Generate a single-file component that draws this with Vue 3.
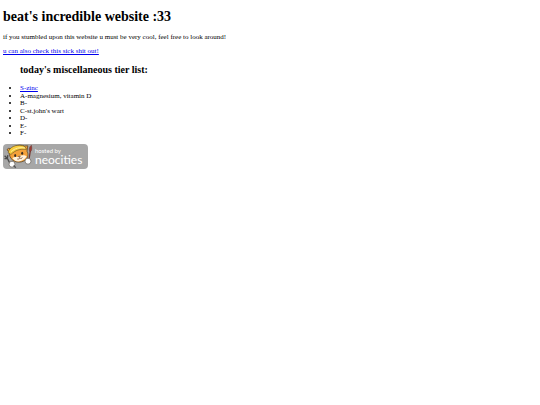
<script setup>
const tiers = [
  { text: 'S-zinc', href: '#zinc' },
  { text: 'A-magnesium, vitamin D' },
  { text: 'B-' },
  { text: "C-st.john's wart" },
  { text: 'D-' },
  { text: 'E-' },
  { text: 'F-' },
]
</script>

<template>
  <main class="page">
    <h1>beat's incredible website :33</h1>
    <p>if you stumbled upon this website u must be very cool, feel free to look around!</p>
    <p><a href="#more">u can also check this sick shit out!</a></p>
    <h2>today's miscellaneous tier list:</h2>
    <ul class="tiers">
      <li v-for="tier in tiers" :key="tier.text">
        <a v-if="tier.href" :href="tier.href">{{ tier.text }}</a>
        <template v-else>{{ tier.text }}</template>
      </li>
    </ul>
    <a class="host" href="#neocities" aria-label="hosted by neocities">
      <svg class="cat" viewBox="0 0 32 25" aria-hidden="true">
        <path d="M7.5 20.5 4.4 14.5 1.6 11.8 M4.4 14.5 4.8 11.2 M4.4 14.5 1.5 14.6" fill="none" stroke="#4b4b4b" stroke-width="1.3" />
        <path d="M6 7.5C3.9 6.8 3.7 4.8 5.4 4.4L9 4.6C12 1.2 17.4.4 21.5 2L24.8 1.8 24 7.2C25.6 10 25.2 13.5 22.6 15.7 19.8 18.4 13.8 19.1 10 16.4 7.4 14.6 6 11 6 7.5Z" fill="#f4a13a" stroke="#5b4526" stroke-width=".8" />
        <path d="M5.1 8.4C6.4 3.2 12.7.2 19.4 1.6 21.5 2 23.2 3.5 23.5 5.4 17 4.7 12.5 6 7.9 10.5Z" fill="#f8cd3e" stroke="#705927" stroke-width=".7" />
        <path d="M8.1 7.6C11.8 4.3 16.5 3 21.9 4" fill="none" stroke="#fff0a0" stroke-width="1" />
        <path d="M9.4 14.3C11.7 12 14.6 14 16.1 12 18.6 10.8 22.5 10.8 23.7 12.6 21.5 16.5 16.7 18.4 12.5 17.1Z" fill="#fff3df" />
        <ellipse cx="12.2" cy="11.5" rx="1" ry="1.5" fill="#382d25" />
        <ellipse cx="19.2" cy="9.3" rx="1" ry="1.5" fill="#382d25" />
        <path d="M15.3 12.5 17.3 12 16.6 13.5Z M14.2 15C15.8 15.5 16.7 14.9 16.8 14 17.8 14.8 19 14.4 19.5 13.5" fill="#d78870" stroke="#65472d" stroke-width=".6" />
        <path d="M27.3 7 25.9 16" stroke="#74372f" stroke-width="1.3" />
        <path d="M26.6 7.3C25.6 4.9 26.5 2.6 28.4 1.2 29 3.6 29 6 27.8 7.4Z" fill="#9e3932" stroke="#673832" stroke-width=".5" />
        <circle cx="9" cy="20.2" r="3" fill="#fff" stroke="#716c67" stroke-width=".8" />
        <circle cx="25" cy="17.2" r="3" fill="#fff" stroke="#716c67" stroke-width=".8" />
        <path d="M10.6 21.5 12.8 23.7" stroke="#555" stroke-width="1.4" />
      </svg>
      <span class="label">
        <span class="small">hosted by</span>
        <span class="brand">neocities</span>
      </span>
    </a>
  </main>
</template>

<style>
body {
  margin: 0;
  background: #fff;
}
</style>

<style scoped>
.page {
  padding: 9px 3px;
  font-family: "Liberation Serif", "Times New Roman", serif;
  font-size: 7px;
  line-height: 8px;
  color: #000;
}
h1 {
  margin: 0 0 8px;
  font-size: 14px;
  line-height: 16px;
}
p {
  margin: 0 0 6px;
}
a {
  color: #0000ee;
}
h2 {
  margin: 9px 0 9px 17px;
  font-size: 10px;
  line-height: 12px;
}
.tiers {
  display: grid;
  height: 53px;
  margin: 0 0 6px;
  padding-left: 17px;
  line-height: 7px;
}
.host {
  display: flex;
  box-sizing: border-box;
  width: 85px;
  height: 25px;
  border-radius: 4px;
  background: #a7a7a7;
  color: #fff;
  font-family: Lato, "Open Sans", sans-serif;
  text-decoration: none;
}
.cat {
  flex: none;
  width: 32px;
  height: 25px;
}
.label {
  display: flex;
  flex-direction: column;
  padding-top: 3px;
}
.small {
  font-size: 6px;
  line-height: 8px;
}
.brand {
  font-size: 12px;
  line-height: 10px;
}
</style>
